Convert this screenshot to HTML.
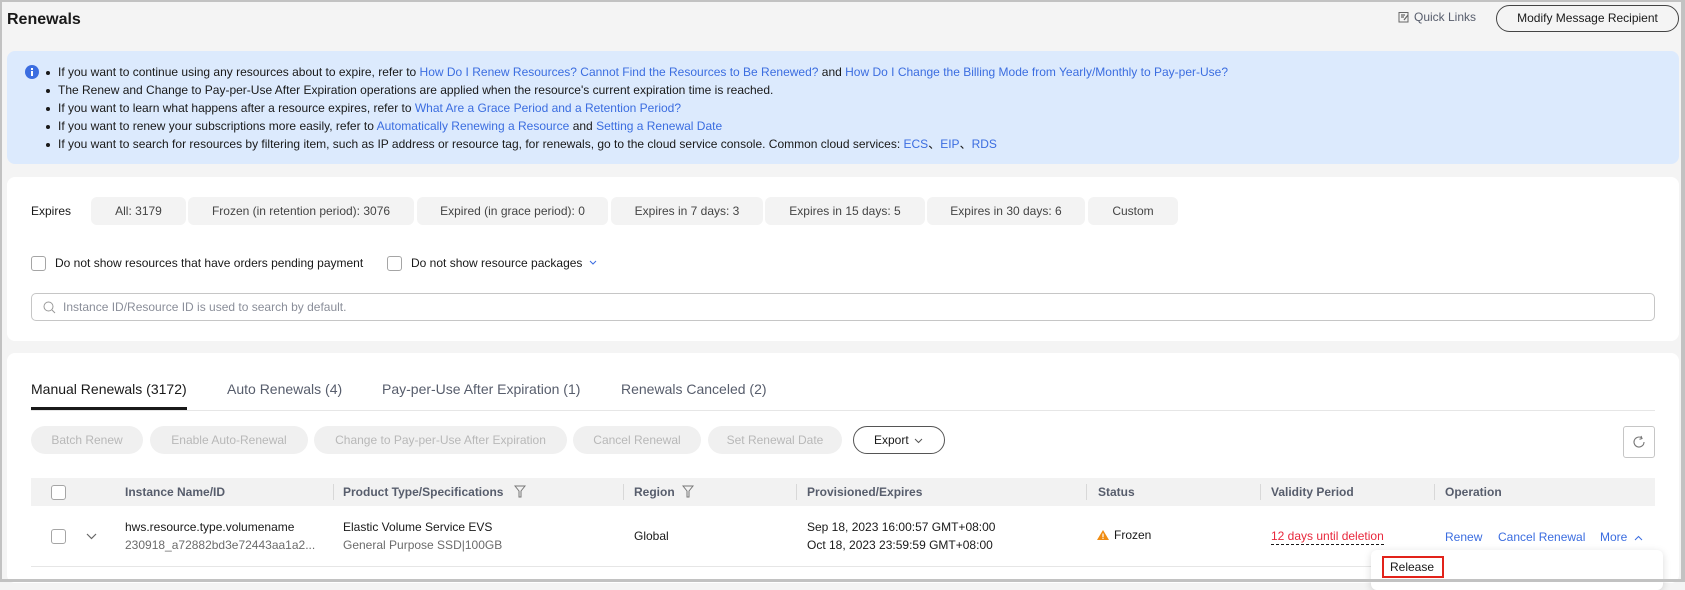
<!DOCTYPE html>
<html><head><meta charset="utf-8"><style>
*{box-sizing:border-box;margin:0;padding:0}
body{width:1685px;height:582px;overflow:hidden;background:#f4f4f4;font-family:"Liberation Sans",Arial,sans-serif;color:#252b3a;position:relative}
.a{position:absolute;white-space:nowrap}
.frame{position:absolute;left:0;top:0;width:1685px;height:582px;border:2px solid #c2c2c2;border-right-width:4px;border-bottom-width:3px;pointer-events:none}
a{color:#3b6de0;text-decoration:none}
.info{left:7px;top:51px;width:1672px;height:113px;background:#dceafd;border-radius:8px}
.il{position:absolute;left:58px;font-size:12px;line-height:14px;white-space:nowrap;color:#191919}
.il:before{content:"";position:absolute;left:-12px;top:6px;width:4px;height:4px;border-radius:2px;background:#191919}
.card{background:#fff;border-radius:8px;position:absolute}
.pill{position:absolute;top:197px;height:28px;background:#f3f3f3;border-radius:6px;font-size:12px;color:#444;text-align:center;line-height:28px}
.cb{position:absolute;width:15px;height:15px;border:1px solid #a5a5a5;border-radius:3px;background:#fff}
.tab{position:absolute;top:381px;font-size:14px;color:#575d6c}
.btn{position:absolute;top:426px;height:28px;border-radius:14px;background:#f0f0f0;color:#b8b8b8;font-size:12px;text-align:center;line-height:28px}
.th{position:absolute;top:485px;font-size:12px;font-weight:bold;color:#575d6c}
.sep{position:absolute;top:484px;width:1px;height:16px;background:#d8d8d8}
.td{position:absolute;font-size:12px;color:#191919}
.td.lk{color:#3b6de0}
</style></head><body>
<div class="a" style="left:7px;top:11px;font-size:16px;font-weight:bold;color:#191919">Renewals</div>
<svg class="a" style="left:1398px;top:11px" width="12" height="12" viewBox="0 0 12 12"><rect x="1" y="1.5" width="9" height="9.5" fill="none" stroke="#666" stroke-width="1"/><path d="M3 4h4M3 6h3M6 9l4-5" stroke="#666" stroke-width="1.2"/></svg>
<div class="a" style="left:1414px;top:10px;font-size:12px;color:#575d6c">Quick Links</div>
<div class="a" style="left:1496px;top:5px;width:183px;height:27px;border:1px solid #444;border-radius:14px;font-size:12px;text-align:center;line-height:25px;color:#191919">Modify Message Recipient</div>

<div class="a info"></div>
<svg class="a" style="left:25px;top:65px" width="14" height="14"><circle cx="7" cy="7" r="7" fill="#3b6de0"/><rect x="6" y="6" width="2" height="5" fill="#fff"/><rect x="6" y="3" width="2" height="2" fill="#fff"/></svg>
<div class="il" style="top:65px">If you want to continue using any resources about to expire, refer to <a>How Do I Renew Resources? Cannot Find the Resources to Be Renewed?</a> and <a>How Do I Change the Billing Mode from Yearly/Monthly to Pay-per-Use?</a></div>
<div class="il" style="top:83px">The Renew and Change to Pay-per-Use After Expiration operations are applied when the resource's current expiration time is reached.</div>
<div class="il" style="top:101px">If you want to learn what happens after a resource expires, refer to <a>What Are a Grace Period and a Retention Period?</a></div>
<div class="il" style="top:119px">If you want to renew your subscriptions more easily, refer to <a>Automatically Renewing a Resource</a> and <a>Setting a Renewal Date</a></div>
<div class="il" style="top:137px">If you want to search for resources by filtering item, such as IP address or resource tag, for renewals, go to the cloud service console. Common cloud services: <a>ECS</a>、<a>EIP</a>、<a>RDS</a></div>

<div class="card" style="left:7px;top:177px;width:1672px;height:164px"></div>
<div class="a" style="left:31px;top:204px;font-size:12px;color:#191919">Expires</div>
<div class="pill" style="left:91px;width:95px">All: 3179</div>
<div class="pill" style="left:188px;width:226px">Frozen (in retention period): 3076</div>
<div class="pill" style="left:417px;width:191px">Expired (in grace period): 0</div>
<div class="pill" style="left:611px;width:152px">Expires in 7 days: 3</div>
<div class="pill" style="left:765px;width:160px">Expires in 15 days: 5</div>
<div class="pill" style="left:927px;width:158px">Expires in 30 days: 6</div>
<div class="pill" style="left:1088px;width:90px">Custom</div>
<div class="cb" style="left:31px;top:256px"></div>
<div class="a" style="left:55px;top:256px;font-size:12px;color:#191919">Do not show resources that have orders pending payment</div>
<div class="cb" style="left:387px;top:256px"></div>
<div class="a" style="left:411px;top:256px;font-size:12px;color:#191919">Do not show resource packages</div>
<svg class="a" style="left:589px;top:260px" width="8" height="6"><path d="M1 1l3 3 3-3" fill="none" stroke="#3b6de0"/></svg>
<div class="a" style="left:31px;top:293px;width:1624px;height:28px;border:1px solid #c6c6c6;border-radius:5px"></div>
<svg class="a" style="left:43px;top:301px" width="13" height="13"><circle cx="5.5" cy="5.5" r="4.5" fill="none" stroke="#999"/><path d="M9 9l3 3" stroke="#999"/></svg>
<div class="a" style="left:63px;top:300px;font-size:12px;color:#8a8e99">Instance ID/Resource ID is used to search by default.</div>

<div class="card" style="left:7px;top:353px;width:1672px;height:230px"></div>
<div class="a" style="left:31px;top:410px;width:1624px;height:1px;background:#e6e6e6"></div>
<div class="a" style="left:31px;top:407px;width:156px;height:3px;background:#191919"></div>
<div class="tab" style="left:31px;color:#191919">Manual Renewals (3172)</div>
<div class="tab" style="left:227px">Auto Renewals (4)</div>
<div class="tab" style="left:382px">Pay-per-Use After Expiration (1)</div>
<div class="tab" style="left:621px">Renewals Canceled (2)</div>

<div class="btn" style="left:31px;width:112px">Batch Renew</div>
<div class="btn" style="left:150px;width:158px">Enable Auto-Renewal</div>
<div class="btn" style="left:314px;width:253px">Change to Pay-per-Use After Expiration</div>
<div class="btn" style="left:573px;width:128px">Cancel Renewal</div>
<div class="btn" style="left:708px;width:134px">Set Renewal Date</div>
<div class="btn" style="left:853px;width:92px;background:#fff;border:1px solid #555;color:#191919;line-height:26px;text-align:left;padding-left:20px">Export</div>
<svg class="a" style="left:914px;top:438px" width="9" height="6"><path d="M1 1l3.5 3.5L8 1" fill="none" stroke="#555"/></svg>
<div class="a" style="left:1623px;top:426px;width:32px;height:32px;border:1px solid #c6c6c6;border-radius:3px"></div>
<svg class="a" style="left:1632px;top:435px" width="14" height="14"><path d="M12 7A5 5 0 1 1 9.5 2.7" fill="none" stroke="#777" stroke-width="1.1"/><path d="M9 1l1 2.5-2.5 .8" fill="none" stroke="#777" stroke-width="1.1"/></svg>

<div class="a" style="left:31px;top:478px;width:1624px;height:28px;background:#f2f2f2"></div>
<div class="cb" style="left:51px;top:485px"></div>
<div class="th" style="left:125px">Instance Name/ID</div>
<div class="sep" style="left:333px"></div>
<div class="th" style="left:343px">Product Type/Specifications</div>
<svg class="a" style="left:514px;top:485px" width="12" height="13"><path d="M1 1h10L7 6v6H5V6z" fill="none" stroke="#777"/></svg>
<div class="sep" style="left:623px"></div>
<div class="th" style="left:634px">Region</div>
<svg class="a" style="left:682px;top:485px" width="12" height="13"><path d="M1 1h10L7 6v6H5V6z" fill="none" stroke="#777"/></svg>
<div class="sep" style="left:796px"></div>
<div class="th" style="left:807px">Provisioned/Expires</div>
<div class="sep" style="left:1086px"></div>
<div class="th" style="left:1098px">Status</div>
<div class="sep" style="left:1260px"></div>
<div class="th" style="left:1271px">Validity Period</div>
<div class="sep" style="left:1434px"></div>
<div class="th" style="left:1445px">Operation</div>

<div class="cb" style="left:51px;top:529px"></div>
<svg class="a" style="left:86px;top:533px" width="11" height="7"><path d="M1 1l4.5 4.5L10 1" fill="none" stroke="#666" stroke-width="1.2"/></svg>
<div class="td" style="left:125px;top:520px">hws.resource.type.volumename</div>
<div class="td" style="left:125px;top:538px;color:#6b6b6b">230918_a72882bd3e72443aa1a2...</div>
<div class="td" style="left:343px;top:520px">Elastic Volume Service EVS</div>
<div class="td" style="left:343px;top:538px;color:#6b6b6b">General Purpose SSD|100GB</div>
<div class="td" style="left:634px;top:529px">Global</div>
<div class="td" style="left:807px;top:520px">Sep 18, 2023 16:00:57 GMT+08:00</div>
<div class="td" style="left:807px;top:538px">Oct 18, 2023 23:59:59 GMT+08:00</div>
<svg class="a" style="left:1097px;top:530px" width="12" height="10"><path d="M6 0L12 10H0z" fill="#f08c12"/><rect x="5.4" y="3.5" width="1.2" height="3.5" fill="#fff"/><rect x="5.4" y="7.7" width="1.2" height="1.2" fill="#fff"/></svg>
<div class="td" style="left:1114px;top:528px">Frozen</div>
<div class="td" style="left:1271px;top:529px;color:#e8283c;border-bottom:1px dashed #191919;padding-bottom:1px">12 days until deletion</div>
<div class="td lk" style="left:1445px;top:530px">Renew</div>
<div class="td lk" style="left:1498px;top:530px">Cancel Renewal</div>
<div class="td lk" style="left:1600px;top:530px">More</div>
<svg class="a" style="left:1634px;top:535px" width="9" height="6"><path d="M1 5l3.5-3.5L8 5" fill="none" stroke="#3b6de0"/></svg>
<div class="a" style="left:31px;top:566px;width:1624px;height:1px;background:#e6e6e6"></div>
<div class="a" style="left:1371px;top:550px;width:292px;height:40px;background:#fff;border-radius:6px;box-shadow:0 2px 8px rgba(0,0,0,.15)"></div>
<div class="a" style="left:1382px;top:556px;width:62px;height:22px;border:2px solid #e2231a;font-size:12px;line-height:18px;padding-left:6px;color:#191919">Release</div>
<div class="frame"></div>
</body></html>
